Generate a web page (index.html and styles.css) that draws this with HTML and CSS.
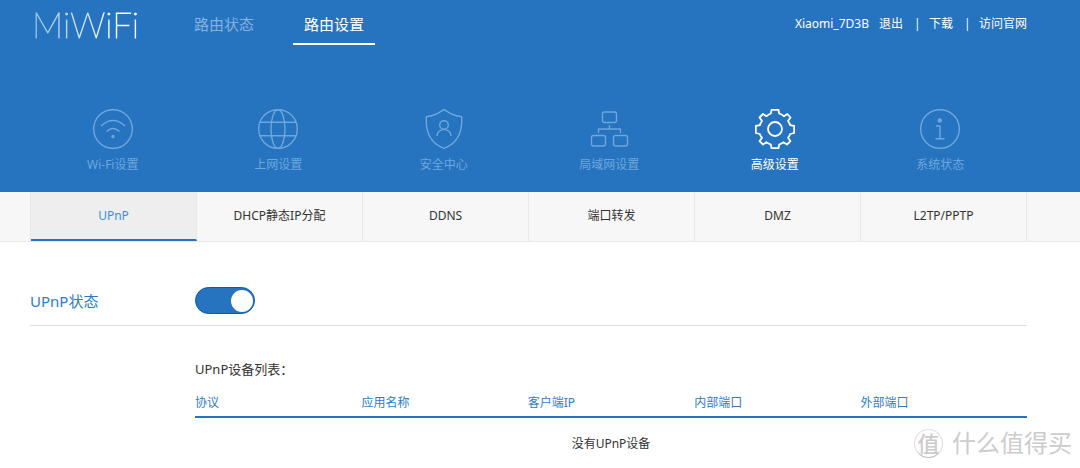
FILE: index.html
```
<!DOCTYPE html>
<html lang="zh-CN">
<head>
<meta charset="utf-8">
<title>MiWiFi 路由设置</title>
<meta name="viewport" content="width=device-width, initial-scale=1">
<link rel="stylesheet" href="styles.css">
</head>
<body>
<header class="header">
  <div class="topbar wrap">
    <a class="logo" href="#">MiWiFi</a>
    <nav class="main-nav">
      <a href="#">路由状态</a>
      <a class="active" href="#">路由设置</a>
    </nav>
    <div class="account">
      <span>Xiaomi_7D3B</span>
      <a href="#">退出</a>
      <span class="bar">|</span>
      <a href="#">下载</a>
      <span class="bar">|</span>
      <a href="#">访问官网</a>
    </div>
  </div>
  <nav class="sections wrap">
    <a href="#">
      <svg class="icon" viewBox="0 0 40 40"><circle cx="20" cy="20" r="19.3"/><path d="M8 17Q20 6 32 17M13.500 22.500Q20 16.500 26.500 22.500"/><circle class="solid" cx="20" cy="27.500" r="1"/></svg>
      <span>Wi-Fi设置</span>
    </a>
    <a href="#">
      <svg class="icon" viewBox="0 0 40 40"><circle cx="20" cy="20" r="19.3"/><ellipse cx="20" cy="20" rx="7" ry="19.3"/><path d="M2 13.300H38M2 26.700H38"/></svg>
      <span>上网设置</span>
    </a>
    <a href="#">
      <svg class="icon" viewBox="0 0 40 40"><path d="M20 .8C17 1.500 14 6.500 2.300 7.800C1.500 22 5 34 20 39.300C35 34 38.500 22 37.700 7.800C26 6.500 23 1.500 20 .8Z"/><circle cx="20" cy="16" r="4.300"/><path d="M13 27C13 18.500 27 18.500 27 27"/></svg>
      <span>安全中心</span>
    </a>
    <a href="#">
      <svg class="icon" viewBox="0 0 40 40"><rect x="13.500" y="3" width="14" height="10.500" rx="2"/><rect x="2.500" y="26.500" width="14" height="10.500" rx="2"/><rect x="24.500" y="26.500" width="14" height="10.500" rx="2"/><path d="M20.500 16V20M9.500 24V20H31.500V24"/></svg>
      <span>局域网设置</span>
    </a>
    <a class="active" href="#">
      <svg class="icon" viewBox="0 0 40 40"><path d="M16.500 .8H23.500L24.200 4.500Q27 5.500 29 7.200L32.300 5L35.500 8.500L33 12Q34.500 14 35.200 16.200L39.200 17V24L35.200 25Q34.500 27 33 28.800L35.500 32.200L32 35.500L28.500 33.200Q26.500 34.500 24.200 35.500L23.500 39.200H16.500L15.800 35.500Q13.500 34.500 11.500 33.200L8 35.500L4.500 32.200L7 28.800Q5.500 27 4.800 25L.8 24V17L4.800 16.200Q5.500 14 7 12L4.500 8.500L8 5L11.500 7.200Q13.500 5.500 15.800 4.500Z"/><circle cx="20" cy="20" r="7"/></svg>
      <span>高级设置</span>
    </a>
    <a href="#">
      <svg class="icon" viewBox="0 0 40 40"><circle cx="20" cy="20" r="19.3"/><circle class="solid" cx="19.700" cy="11.500" r="1.500"/><path d="M16 17H20V29.700M15.500 29.700H24.500"/></svg>
      <span>系统状态</span>
    </a>
  </nav>
</header>
<nav class="tabs">
  <div class="tab-list wrap">
    <a class="active" href="#">UPnP</a>
    <a href="#">DHCP静态IP分配</a>
    <a href="#">DDNS</a>
    <a href="#">端口转发</a>
    <a href="#">DMZ</a>
    <a href="#">L2TP/PPTP</a>
  </div>
</nav>
<main class="wrap">
  <div class="status">
    <label for="upnp">UPnP状态</label>
    <input class="switch" type="checkbox" role="switch" id="upnp" checked>
  </div>
  <section class="devices">
    <h2>UPnP设备列表：</h2>
    <table>
      <thead><tr><th>协议</th><th>应用名称</th><th>客户端IP</th><th>内部端口</th><th>外部端口</th></tr></thead>
      <tbody><tr><td colspan="5">没有UPnP设备</td></tr></tbody>
    </table>
  </section>
</main>
<div class="watermark"><span class="seal">值</span><span>什么值得买</span></div>
</body>
</html>
```
FILE: styles.css
```
* { box-sizing: border-box; }
body {
  margin: 0;
  background: #fff;
  color: #333;
  font: 12px/20px "Noto Sans", "Noto Sans CJK SC", sans-serif;
}
a { color: inherit; text-decoration: none; }
.wrap { margin: 0 53px 0 30px; }

.header { background: #2673bf; color: #fff; padding-bottom: 16px; }
.topbar { display: flex; align-items: flex-start; height: 48px; }
.logo {
  width: 147px;
  padding-left: 2px;
  font: 100 35px/48px Lato, sans-serif;
  background: linear-gradient(90deg, #8fbbe4 0, #fff 90px);
  background-clip: text;
  color: transparent;
  -webkit-text-stroke: 1px transparent;
}
.main-nav { display: flex; gap: 28px; font-size: 15px; line-height: 24px; padding-top: 12px; margin-left: 6px; }
.main-nav a { padding: 0 11px 7px; color: #83b2de; border-bottom: 2px solid transparent; }
.main-nav .active { color: #fff; border-color: #fff; }
.account { display: flex; margin-left: auto; padding-top: 14px; }
.account a { margin-left: 10px; }
.account .bar { margin-left: 11px; width: 4px; }
.account .bar + a { margin-left: 11px; }

.sections { display: grid; grid-template-columns: repeat(6, 1fr); padding: 61px 4px 0 0; }
.sections a { display: flex; flex-direction: column; align-items: center; gap: 6px; height: 67px; color: #6fa7dc; }
.sections .active { color: #fff; }
.icon { width: 40px; height: 40px; flex: none; fill: none; stroke: currentColor; stroke-width: 1.4; stroke-linejoin: round; }
.active .icon { stroke-width: 1.8; }
.icon .solid { fill: currentColor; }

.tabs { background: #f7f7f7; border-bottom: 1px solid #e8e8e8; }
.tab-list { display: grid; grid-template-columns: repeat(6, 1fr); border-left: 1px solid #e8e8e8; }
.tab-list a { height: 49px; padding-top: 14px; text-align: center; border-right: 1px solid #e8e8e8; }
.tab-list .active { color: #3f8ddb; background: #eee; border-bottom: 2px solid #2673bf; }

.status { display: flex; align-items: center; padding: 45px 0 11px; border-bottom: 1px solid #ddd; }
.status label { width: 165px; color: #2d7cc9; font-size: 15px; }
.switch {
  appearance: none;
  display: flex;
  justify-content: flex-end;
  align-items: center;
  width: 60px;
  height: 27px;
  margin: 0;
  padding: 0 1px;
  border: 1px solid #0c59a8;
  border-radius: 14px;
  background: #2673bf;
}
.switch::before { content: ""; width: 22px; height: 22px; border-radius: 50%; background: #fff; }
.switch:not(:checked) { justify-content: flex-start; background: #bbb; border-color: #aaa; }

.devices { margin-left: 165px; padding-top: 33px; }
.devices h2 { margin: 0 0 14px; font-size: 13px; font-weight: 400; line-height: 20px; }
table { width: 100%; table-layout: fixed; border-collapse: collapse; }
th { padding: 0 0 3px; text-align: left; font-weight: 400; color: #2d7cc9; border-bottom: 2px solid #2673bf; }
td { padding: 16px 0 12px; text-align: center; }

.watermark {
  position: absolute;
  right: 8px;
  top: 427px;
  display: flex;
  align-items: center;
  gap: 9px;
  color: #ccc;
  font-size: 24px;
  font-weight: 400;
  line-height: 32px;
}
.seal { width: 29px; height: 29px; border-radius: 50%; border: 1px solid #ddd; border-bottom-color: #bbb; line-height: 26px; font-size: 22px; font-weight: 500; text-align: center; }
```
